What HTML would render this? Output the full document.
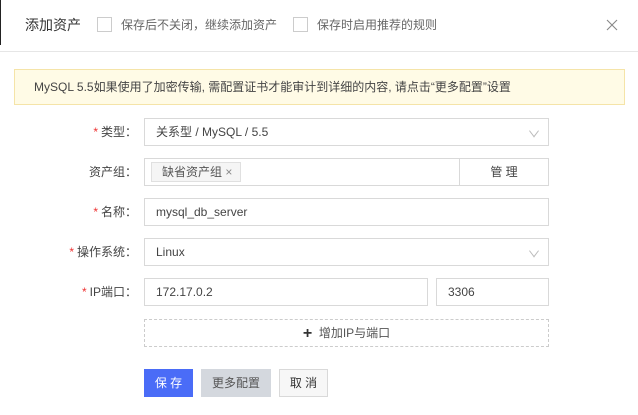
<!DOCTYPE html><html><head><meta charset="utf-8"><style>
*{box-sizing:border-box;margin:0;padding:0}
body{width:638px;height:415px;background:#fff;font-family:"Liberation Sans","Noto Sans CJK SC",sans-serif;font-size:12px;color:#333;position:relative;overflow:hidden}
.a{position:absolute}
.hdr{left:0;top:0;width:638px;height:52px;border-bottom:1px solid #e6e6e6}
.cb{width:15px;height:15px;border:1px solid #ccc;background:#fff;top:17px}
.inp{border:1px solid #d9d9d9;height:28px;line-height:26px;padding-left:11px;font-size:12px;color:#444}
.lbl{width:137px;left:0;text-align:right;font-size:12px;color:#444;line-height:28px}
.lbl b{color:#e33;font-weight:normal;margin-right:3px}
.chev{right:10px;top:8px;width:8px;height:8px;border-right:1px solid #bbb;border-bottom:1px solid #bbb;transform:rotate(45deg) skew(8deg,8deg)}
.btn{top:369px;height:28px;line-height:28px;text-align:center;font-size:12px}
</style></head><body>
<div class="a" style="left:0;top:0;width:1px;height:45px;background:#222"></div>
<div class="a hdr"></div>
<div class="a" style="left:25px;top:15px;font-size:14px;color:#333">添加资产</div>
<div class="a cb" style="left:97px"></div>
<div class="a" style="left:121px;top:16px;color:#666">保存后不关闭，继续添加资产</div>
<div class="a cb" style="left:293px"></div>
<div class="a" style="left:317px;top:16px;color:#666">保存时启用推荐的规则</div>
<svg class="a" style="left:606px;top:19px" width="12" height="12" viewBox="0 0 12 12"><path d="M1 1L11 11M11 1L1 11" stroke="#888" stroke-width="1.1" fill="none"/></svg>
<div class="a" style="left:14px;top:69px;width:611px;height:36px;background:#fffbe6;border:1px solid #f5e4a8;line-height:34px;padding-left:19px;color:#444">MySQL 5.5如果使用了加密传输, 需配置证书才能审计到详细的内容, 请点击“更多配置”设置</div>

<div class="a lbl" style="top:118px"><b>*</b>类型：</div>
<div class="a inp" style="left:144px;top:118px;width:405px">关系型 / MySQL / 5.5<div class="a chev"></div></div>

<div class="a lbl" style="top:158px">资产组：</div>
<div class="a inp" style="left:144px;top:158px;width:405px;padding-left:6px"><span style="display:inline-block;margin-top:3px;height:20px;line-height:18px;border:1px solid #e0e0e0;background:#f5f5f5;padding:0 8px 0 10px;color:#555">缺省资产组 <span style="color:#888">×</span></span></div>
<div class="a" style="left:459px;top:158px;width:90px;height:28px;border:1px solid #d9d9d9;line-height:26px;text-align:center;color:#444">管 理</div>

<div class="a lbl" style="top:198px"><b>*</b>名称：</div>
<div class="a inp" style="left:144px;top:198px;width:405px">mysql_db_server</div>

<div class="a lbl" style="top:238px"><b>*</b>操作系统：</div>
<div class="a inp" style="left:144px;top:238px;width:405px">Linux<div class="a chev"></div></div>

<div class="a lbl" style="top:278px"><b>*</b>IP端口：</div>
<div class="a inp" style="left:144px;top:278px;width:284px">172.17.0.2</div>
<div class="a inp" style="left:436px;top:278px;width:113px">3306</div>

<div class="a" style="left:144px;top:319px;width:405px;height:28px;border:1px dashed #ccc;line-height:26px;text-align:center;color:#555"><span style="font-size:16px;font-weight:bold;color:#333;vertical-align:-1px">+</span>&nbsp; 增加IP与端口</div>

<div class="a btn" style="left:144px;width:49px;background:#4a6cf7;color:#fff">保 存</div>
<div class="a btn" style="left:201px;width:70px;background:#d4d8de;color:#555">更多配置</div>
<div class="a btn" style="left:279px;width:49px;border:1px solid #d9d9d9;background:#f7f7f7;color:#333;line-height:26px">取 消</div>
</body></html>
